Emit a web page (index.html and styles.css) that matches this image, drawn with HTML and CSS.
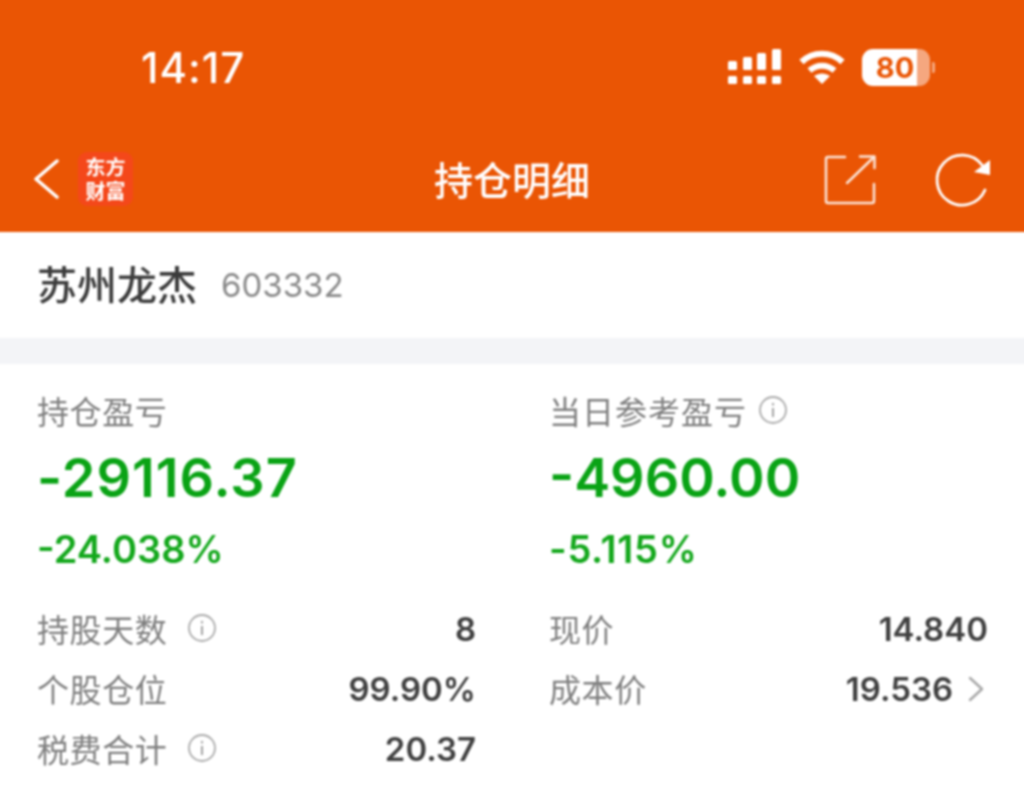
FILE: index.html
```html
<!DOCTYPE html>
<html lang="zh-CN">
<head>
<meta charset="utf-8">
<title>持仓明细</title>
<link rel="stylesheet" href="styles.css">
</head>
<body>
<div class="page">
  <header class="top">
    <div class="status">
      <span class="time">14:17</span>
      <div class="status-icons">
        <svg class="signal" width="54" height="36" viewBox="0 0 54 36" fill="#fff">
          <rect x="0" y="12" width="9" height="9" rx="1.500"/><rect x="15" y="8" width="9" height="13" rx="1.500"/><rect x="29" y="4" width="9" height="17" rx="1.500"/><rect x="44" y="0" width="9" height="21" rx="1.500"/>
          <rect x="0" y="27" width="9" height="8" rx="1.500"/><rect x="15" y="27" width="9" height="8" rx="1.500"/><rect x="29" y="27" width="9" height="8" rx="1.500"/><rect x="44" y="27" width="9" height="8" rx="1.500"/>
        </svg>
        <svg class="wifi" width="46" height="36" viewBox="0 0 46 36" fill="none" stroke="#fff" stroke-width="6">
          <path d="M2.500 13C14 2 32 2 43.500 13"/><path d="M10.500 21.500C18 15 28 15 35.500 21.500"/><path d="M23 35L15 27C20 23.500 26 23.500 31 27Z" fill="#fff" stroke="none"/>
        </svg>
        <div class="battery">
          <div class="battery-body"><span class="battery-level">80</span></div>
          <i class="battery-tip"></i>
        </div>
      </div>
    </div>
    <nav class="nav">
      <div class="nav-left">
        <svg width="26" height="42" viewBox="0 0 26 42" fill="none" stroke="#fff" stroke-width="3.500" stroke-linecap="round" stroke-linejoin="round"><path d="M23 3L2 21L23 39"/></svg>
        <div class="logo"><span>东方</span><span>财富</span></div>
      </div>
      <h1 class="nav-title">持仓明细</h1>
      <div class="nav-right">
        <svg width="54" height="52" viewBox="0 0 54 52" fill="none" stroke="#fff" stroke-width="2.500" opacity=".85" stroke-linejoin="round" stroke-linecap="round">
          <path d="M21 4H4Q2 4 2 6V48Q2 50 4 50H48Q50 50 50 48V31"/><path d="M23 30L50 4"/><path d="M36 3.500H50.500V15"/>
        </svg>
        <svg class="refresh" width="52" height="52" viewBox="0 0 52 52" fill="none" stroke="#fff" stroke-width="2.800" stroke-linecap="round">
          <path d="M44 12A25 25 0 1 0 47 37"/><path d="M52 7V22L36 19Z" fill="#fff" stroke="none"/>
        </svg>
      </div>
    </nav>
  </header>
  <section class="stock">
    <span class="stock-name">苏州龙杰</span>
    <span class="stock-code">603332</span>
  </section>
  <div class="divider"></div>
  <section class="panel">
    <div class="summary">
      <div class="summary-col">
        <div class="label">持仓盈亏</div>
        <div class="big big-wide">-29116.37</div>
        <div class="pct">-24.038%</div>
      </div>
      <div class="summary-col">
        <div class="label label-wide">当日参考盈亏<svg class="info info-head" width="30" height="30" viewBox="0 0 30 30"><use href="#info"/></svg></div>
        <div class="big">-4960.00</div>
        <div class="pct pct-wide">-5.115%</div>
      </div>
    </div>
    <div class="details">
      <div class="detail-col">
        <div class="row"><span class="label">持股天数<svg class="info" width="30" height="30" viewBox="0 0 30 30"><use href="#info"/></svg></span><span class="value">8</span></div>
        <div class="row"><span class="label">个股仓位</span><span class="value">99.90%</span></div>
        <div class="row"><span class="label">税费合计<svg class="info" width="30" height="30" viewBox="0 0 30 30"><use href="#info"/></svg></span><span class="value">20.37</span></div>
      </div>
      <div class="detail-col">
        <div class="row"><span class="label">现价</span><span class="value">14.840</span></div>
        <div class="row"><span class="label">成本价</span><span class="value with-arrow">19.536<svg width="16" height="26" viewBox="0 0 16 26" fill="none" stroke="#a8a8a8" stroke-width="2.500" stroke-linecap="round" stroke-linejoin="round"><path d="M2 2L14 13L2 24"/></svg></span></div>
      </div>
    </div>
  </section>
</div>
<svg class="defs" width="0" height="0">
  <symbol id="info" viewBox="0 0 30 30">
    <circle cx="15" cy="15" r="13" fill="none" stroke="#ababab" stroke-width="1.800"/>
    <rect x="14" y="13" width="2" height="9" fill="#a3a3a3"/>
    <rect x="14" y="8" width="2" height="2.400" fill="#a3a3a3"/>
  </symbol>
</svg>
</body>
</html>
```

FILE: styles.css
```css
* { box-sizing: border-box; }
html, body { margin: 0; padding: 0; background: #fff; }
body {
  width: 1024px;
  height: 793px;
  overflow: hidden;
  font-family: Inter, "Noto Sans CJK SC", sans-serif;
}
/* The page bleeds 4px past the window so the soft focus does not fade its edges. */
.page { filter: blur(0.9px); margin: -4px; width: 1032px; height: 801px; overflow: hidden; background: #fff; }
.defs { position: absolute; }

.top { background: #ea5504; height: 236px; padding: 4px 4px 0; color: #fff; }
.status {
  height: 134px;
  padding: 0 89px 0 141px;
  display: flex;
  align-items: center;
  justify-content: space-between;
}
.time { font-size: 42px; font-weight: 500; letter-spacing: 1px; }
.status-icons { display: flex; align-items: center; gap: 17px; }
.battery { display: flex; align-items: center; gap: 2px; }
.battery-body {
  width: 68px;
  height: 37px;
  border-radius: 11px;
  background: linear-gradient(90deg, #fff 0 81%, #f5a77f 81% 100%);
  display: flex;
  align-items: center;
  justify-content: center;
}
.battery-level { color: #ea5504; font-size: 29px; font-weight: 700; line-height: 1; margin-right: 2px; }
.battery-tip { width: 3px; height: 11px; background: #f5a77f; border-radius: 0 2px 2px 0; }

.nav {
  height: 98px;
  padding: 0 34px 8px 34px;
  display: flex;
  align-items: center;
  position: relative;
}
.nav-left { display: flex; align-items: center; gap: 18px; }
.logo {
  width: 55px;
  height: 54px;
  border-radius: 9px;
  background: #f4481a;
  color: #fff;
  font-family: "Noto Sans CJK SC", sans-serif;
  font-size: 20px;
  font-weight: 700;
  line-height: 24px;
  display: flex;
  flex-direction: column;
  align-items: center;
  justify-content: center;
}
.nav-title {
  position: absolute;
  left: 0;
  right: 0;
  top: 18px;
  margin: 0;
  text-align: center;
  font-family: "Noto Sans CJK SC", sans-serif;
  font-size: 39px;
  font-weight: 500;
  line-height: 52px;
}
.nav-right { margin-left: auto; display: flex; align-items: center; gap: 60px; }
.refresh { overflow: visible; }

.stock {
  height: 106px;
  padding: 0 41px 4px;
  display: flex;
  align-items: center;
  gap: 24px;
}
.stock-name { font-family: "Noto Sans CJK SC", sans-serif; font-size: 40px; font-weight: 500; color: #3c3c3c; }
.stock-code { font-size: 33px; color: #8a8a8a; margin-top: 4px; }
.divider { height: 26px; background: #f3f4f7; }

.panel { padding: 22px 40px 0 41px; }
.summary, .details { display: grid; grid-template-columns: 439px 439px; column-gap: 73px; }
.label {
  display: flex;
  align-items: center;
  font-family: "Noto Sans CJK SC", sans-serif;
  font-size: 32px;
  line-height: 48px;
  letter-spacing: .6px;
  color: #7f7f7f;
}
.label-wide { letter-spacing: 1px; }
.info { margin-left: 20px; }
.info-head { margin-left: 11px; }
.big { font-size: 54px; font-weight: 600; line-height: 72px; margin-top: 8px; color: #0aa315; }
.big-wide { letter-spacing: 1px; }
.pct { font-size: 38px; font-weight: 600; line-height: 48px; margin-top: 11px; color: #14a81c; }
.pct-wide { letter-spacing: .7px; }
.details { margin-top: 26px; }
.row { height: 60px; display: flex; align-items: center; justify-content: space-between; }
.row .label { margin-top: -2px; }
.value { font-size: 33px; font-weight: 600; color: #404040; }
.with-arrow { display: flex; align-items: center; gap: 15px; margin-right: 4px; }
```
